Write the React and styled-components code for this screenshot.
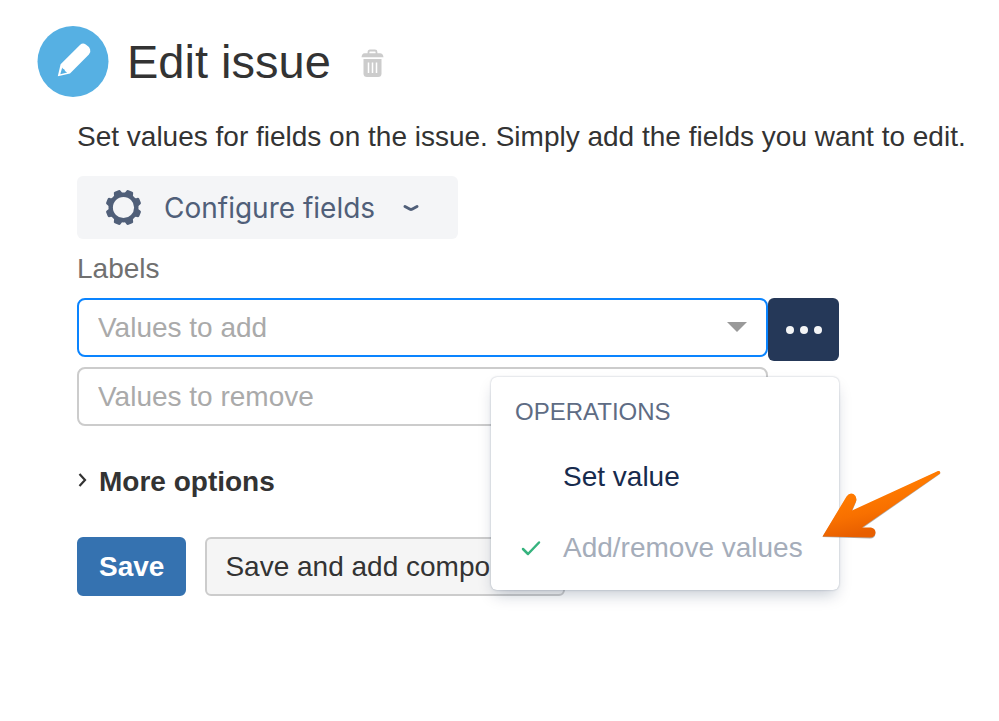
import React, { useState } from 'react';
import styled, { createGlobalStyle } from 'styled-components';

const GlobalStyle = createGlobalStyle`
  * {
    box-sizing: border-box;
  }
  body {
    margin: 0;
    background-color: #fff;
    color: #333;
    font-family: 'Liberation Sans', Arial, sans-serif;
    font-size: 28px;
    line-height: 32px;
  }
  button,
  input {
    margin: 0;
    padding: 0;
    border: none;
    background: none;
    font: inherit;
    color: inherit;
  }
  button {
    cursor: pointer;
  }
`;

const Page = styled.main`
  padding: 26px 37px;
`;

const Header = styled.header`
  display: flex;
  align-items: center;
`;

const Badge = styled.span`
  display: flex;
  flex: none;
  width: 72px;
  height: 71px;
`;

const Title = styled.h1`
  margin: 0 0 0 18px;
  font-size: 47px;
  font-weight: 400;
  line-height: 56px;
`;

const DeleteButton = styled.button`
  display: flex;
  margin: 4px 0 0 30px;
`;

const Body = styled.form`
  display: flex;
  flex-direction: column;
  align-items: flex-start;
  padding: 24px 0 0 40px;
`;

const Description = styled.p`
  margin: 0 0 23px;
  white-space: nowrap;
`;

const ConfigureButton = styled.button`
  display: flex;
  align-items: center;
  height: 63px;
  padding: 0 37px 0 28px;
  border-radius: 6px;
  background-color: #f4f5f7;
  color: #505f79;
  font-family: Inter, 'Liberation Sans', sans-serif;
`;

const ConfigureText = styled.span`
  margin: 0 26px 0 22px;
`;

const Label = styled.label`
  margin: 14px 0 13px;
  color: #707070;
`;

const Fields = styled.div`
  display: grid;
  grid-template-columns: 1fr 71px;
  row-gap: 6px;
  width: 100%;
  max-width: 762px;
`;

const Field = styled.div`
  display: flex;
  align-items: center;
  height: 59px;
  padding: 0 19px;
  border: 2px solid ${({ $active }) => ($active ? '#0a84ff' : '#ccc')};
  border-radius: 8px;
`;

const FieldInput = styled.input`
  flex: 1;
  min-width: 0;
  outline: none;

  &::placeholder {
    color: #aaa;
    opacity: 1;
  }
`;

const MenuAnchor = styled.div`
  position: relative;
`;

const MoreButton = styled.button`
  display: flex;
  align-items: center;
  justify-content: center;
  width: 100%;
  height: 63px;
  border-radius: 6px;
  background-color: #253858;
`;

const Menu = styled.div`
  position: absolute;
  top: calc(100% + 16px);
  right: 0;
  z-index: 1;
  width: 348px;
  padding: 19px 0 7px;
  border-radius: 6px;
  background-color: #fff;
  box-shadow: 0 8px 16px -4px rgba(9, 30, 66, 0.25), 0 0 2px rgba(9, 30, 66, 0.31);
`;

const MenuHeading = styled.div`
  padding: 0 24px;
  margin-bottom: 13px;
  color: #5e6c84;
  font-size: 24px;
`;

const MenuItem = styled.button`
  display: grid;
  grid-template-columns: 48px 1fr;
  align-items: center;
  width: 100%;
  height: 71px;
  padding: 0 24px;
  color: #172b4d;
  text-align: left;

  &:disabled {
    color: #a5adba;
    cursor: default;
  }
`;

const MenuItemText = styled.span`
  grid-column: 2;
  white-space: nowrap;
`;

const Pointer = styled.svg`
  position: absolute;
  right: -103px;
  bottom: 50px;
  pointer-events: none;
`;

const OptionsToggle = styled.button`
  display: flex;
  align-items: center;
  gap: 11px;
  margin: 40px 0 39px;
  font-weight: 700;
`;

const Actions = styled.div`
  display: flex;
  gap: 19px;
`;

const ActionButton = styled.button`
  height: 59px;
  padding: 0 ${({ $primary }) => ($primary ? 20 : 18)}px;
  border: 2px solid ${({ $primary }) => ($primary ? '#3572b0' : '#ccc')};
  border-radius: 6px;
  background-color: ${({ $primary }) => ($primary ? '#3572b0' : '#f5f5f5')};
  color: ${({ $primary }) => ($primary ? '#fff' : '#333')};
  font-weight: ${({ $primary }) => ($primary ? 700 : 400)};
  white-space: nowrap;
`;

const PencilIcon = () => (
  <svg width="72" height="71" viewBox="0 0 72 71" aria-hidden="true">
    <circle cx="36" cy="35.5" r="35.5" fill="#56b0e3" />
    <path
      d="M20.800 50.200L23.600 38.200 43.200 18.800q2.600-2.300 5.600-.2 3 1.800 4.300 4.600 1 3-1.200 5.200L33 47.500z"
      fill="#fff"
    />
    <path d="M25.200 41.500q.3 1.300 1.300 1.600 1.200.1 1.300 1.400.3 1.300 2.400 1.900L23.300 48.200z" fill="#56b0e3" />
  </svg>
);

const TrashIcon = () => (
  <svg width="23" height="29" viewBox="0 0 23 29" aria-hidden="true">
    <path d="M7.500 5V3Q7.500 1.500 9 1.500h5q1.500 0 1.500 1.500v2" fill="none" stroke="#ccc" strokeWidth="1.800" />
    <path d="M3.500 4.300h15.500q3 0 3.500 3.900h-22Q1 4.300 3.500 4.300z" fill="#ccc" />
    <path d="M2.500 10h18v14.500q0 3.500-3.500 3.500H6q-3.500 0-3.500-3.500z" fill="#ccc" />
    <path d="M7.500 13.500v10.500M11.500 13.500v10.500M15.500 13.500v10.500" stroke="#fff" strokeWidth="1.500" />
  </svg>
);

const GearIcon = () => (
  <svg width="37" height="37" viewBox="-18.500 -18.500 37 37" aria-hidden="true">
    <circle r="12.800" fill="none" stroke="#505f79" strokeWidth="4.400" />
    {[22.5, 67.5, 112.5, 157.5, 202.5, 247.5, 292.5, 337.5].map((angle) => (
      <path
        key={angle}
        transform={`rotate(${angle})`}
        d="M-5.500-13Q-3.900-14-3.700-16.200-3.500-17.900-2-17.900h4Q3.500-17.900 3.700-16.200 3.900-14 5.500-13z"
        fill="#505f79"
      />
    ))}
  </svg>
);

const CheckIcon = () => (
  <svg width="30" height="24" viewBox="0 0 30 24" aria-hidden="true">
    <path d="M8 13l5 5L24 6.500" fill="none" stroke="#36b37e" strokeWidth="2.500" strokeLinecap="round" strokeLinejoin="round" />
  </svg>
);

const ArrowPointer = () => (
  <Pointer width="122" height="72" viewBox="0 0 122 72" aria-hidden="true">
    <defs>
      <linearGradient id="pointerFill" x1="0.350" y1="0.350" x2="0.550" y2="0.850">
        <stop offset="0" stopColor="#ff7a00" />
        <stop offset="0.500" stopColor="#f87000" />
        <stop offset="1" stopColor="#e85f00" />
      </linearGradient>
    </defs>
    <path
      d="M2.500 69L26.500 29.500Q29.500 25 33.500 27 37.500 29.500 36 34L32 43.500 118 3.500Q121 3.500 120 6L42 60.500H51Q55.500 61.500 55.500 65.500 55 70.500 50 70.500z"
      fill="#777"
      opacity="0.600"
    />
    <path
      d="M2.500 68.500L26.500 28.500Q29.500 24 33.500 26 37.500 28.500 36 33.500L32 42.500 118 3Q121 2.800 120 5.500L42 59.500H51Q55.500 60.500 55.500 64.500 55 69.500 50 69.500z"
      fill="url(#pointerFill)"
    />
  </Pointer>
);

const App = () => {
  const [menuOpen, setMenuOpen] = useState(true);
  const [operation, setOperation] = useState('change');

  return (
    <Page>
      <GlobalStyle />
      <Header>
        <Badge>
          <PencilIcon />
        </Badge>
        <Title>Edit issue</Title>
        <DeleteButton type="button" aria-label="Delete">
          <TrashIcon />
        </DeleteButton>
      </Header>
      <Body onSubmit={(e) => e.preventDefault()}>
        <Description>
          Set values for fields on the issue. Simply add the fields you want to edit.
        </Description>
        <ConfigureButton type="button">
          <GearIcon />
          <ConfigureText>Configure fields</ConfigureText>
          <svg width="20" height="12" viewBox="0 0 20 12" aria-hidden="true">
            <path
              d="M4 4.500l5 2.700q1 .5 2 0l5-2.700"
              fill="none"
              stroke="#505f79"
              strokeWidth="3"
              strokeLinecap="round"
            />
          </svg>
        </ConfigureButton>
        <Label htmlFor="labels-add">Labels</Label>
        <Fields>
          <Field $active>
            <FieldInput id="labels-add" placeholder="Values to add" />
            <svg width="20" height="12" viewBox="0 0 20 12" aria-hidden="true">
              <path d="M0 0h20L10 10z" fill="#999" />
            </svg>
          </Field>
          <MenuAnchor>
            <MoreButton
              type="button"
              aria-label="Operations"
              aria-expanded={menuOpen}
              onClick={() => setMenuOpen(!menuOpen)}
            >
              <svg width="36" height="8" viewBox="0 0 36 8" aria-hidden="true">
                <g fill="#f4f5f7">
                  <circle cx="4" cy="4" r="4" />
                  <circle cx="18" cy="4" r="4" />
                  <circle cx="32" cy="4" r="4" />
                </g>
              </svg>
            </MoreButton>
            {menuOpen && (
              <Menu>
                <MenuHeading>OPERATIONS</MenuHeading>
                <MenuItem type="button" onClick={() => setOperation('set')} disabled={operation === 'set'}>
                  {operation === 'set' && <CheckIcon />}
                  <MenuItemText>Set value</MenuItemText>
                </MenuItem>
                <MenuItem type="button" onClick={() => setOperation('change')} disabled={operation === 'change'}>
                  {operation === 'change' && <CheckIcon />}
                  <MenuItemText>Add/remove values</MenuItemText>
                </MenuItem>
                <ArrowPointer />
              </Menu>
            )}
          </MenuAnchor>
          <Field>
            <FieldInput aria-label="Labels to remove" placeholder="Values to remove" />
          </Field>
        </Fields>
        <OptionsToggle type="button">
          <svg width="11" height="18" viewBox="0 0 11 18" aria-hidden="true">
            <path d="M2.500 1l5.500 6L2.500 13" fill="none" stroke="#333" strokeWidth="2.200" />
          </svg>
          More options
        </OptionsToggle>
        <Actions>
          <ActionButton $primary type="submit">
            Save
          </ActionButton>
          <ActionButton type="button">Save and add component</ActionButton>
        </Actions>
      </Body>
    </Page>
  );
};

export default App;
